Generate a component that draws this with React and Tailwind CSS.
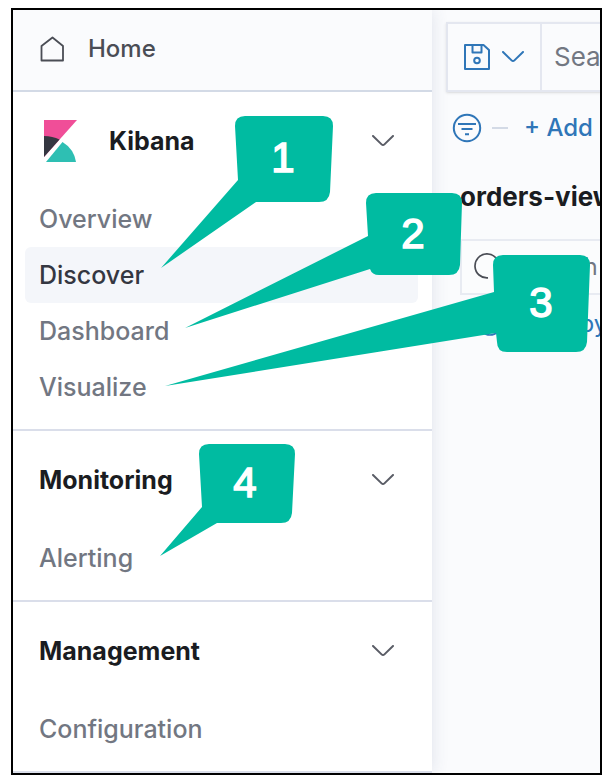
import React from "react";

// Collapsible groups of the side navigation.
const SECTIONS = [
  {
    title: "Kibana",
    logo: true,
    items: ["Overview", "Discover", "Dashboard", "Visualize"],
  },
  { title: "Monitoring", items: ["Alerting"] },
  { title: "Management", items: ["Configuration"] },
];

const ACTIVE = "Discover";

// Numbered callouts drawn over the page: outline + centre of the number.
const CALLOUTS = [
  {
    n: 1,
    x: 283,
    y: 172,
    d: "M245 116H323Q333 116 333 126L330 192Q329 202 319 202H256L161 268L238 180L235 126Q235 116 245 116Z",
  },
  {
    n: 2,
    x: 413,
    y: 248,
    d: "M376 193H452Q462 193 462 203L460 265Q459 275 449 275H379Q372 275 370 269L185 328L368 236L366 203Q366 193 376 193Z",
  },
  {
    n: 3,
    x: 541,
    y: 317,
    d: "M503 255H580Q590 255 590 265L587 342Q586 352 576 352H507Q497 352 497 342L496 333L165 386L494 292L493 265Q493 255 503 255Z",
  },
  {
    n: 4,
    x: 245,
    y: 497,
    d: "M209 444H285Q295 444 295 454L292 513Q291 523 281 523H217L160 556L202 507L199 454Q199 444 209 444Z",
  },
];

function Chevron({ className }) {
  return (
    <svg
      className={className}
      width="22"
      height="12"
      viewBox="0 0 22 12"
      fill="none"
      stroke="currentColor"
      strokeWidth="2"
      strokeLinecap="round"
      strokeLinejoin="round"
    >
      <path d="M1 1L9.6 9.4Q11 10.8 12.4 9.4L21 1" />
    </svg>
  );
}

function HomeIcon() {
  return (
    <svg width="24" height="26" viewBox="0 0 24 26" fill="none" stroke="#4a4d55" strokeWidth="1.8" strokeLinejoin="round">
      <path d="M1.5 10L12.500 1.500L23 10V24.500H1.500Z" />
    </svg>
  );
}

function KibanaLogo() {
  return (
    <svg width="34" height="44" viewBox="0 0 34 44">
      <path d="M1 1V38L34 1Z" fill="#f04e98" />
      <path d="M1 17V38L16.500 20.500Q9.500 17 1 17Z" fill="#343741" />
      <path d="M19.500 23L3 43H33Q31 30 19.500 23Z" fill="#2ebfb3" />
    </svg>
  );
}

function SaveIcon() {
  return (
    <svg width="26" height="26" viewBox="0 0 26 26" fill="none" stroke="currentColor" strokeWidth="2" strokeLinejoin="round">
      <path d="M1 1H19.500L25 6V25H1Z" />
      <path d="M8.500 1V8.500H17.500V1" />
      <circle cx="13" cy="16.500" r="2.800" />
    </svg>
  );
}

function FilterIcon() {
  return (
    <svg width="30" height="30" viewBox="0 0 30 30" fill="none" stroke="currentColor" strokeWidth="2">
      <circle cx="15" cy="15" r="13.200" />
      <path d="M6 11H24M9.500 16H20.500M13 21.300H17" />
    </svg>
  );
}

function NavSection({ title, logo, items }) {
  return (
    <section className="border-b-2 border-[#dadeea] pb-[14px] text-[25px]">
      <button className="flex h-[98px] w-full items-center pl-[26px] pr-[38px] text-left">
        {logo && (
          <span className="mr-8 ml-1">
            <KibanaLogo />
          </span>
        )}
        <span className="flex-1 font-bold text-[#1a1c21]">{title}</span>
        <Chevron className="text-[#5a5d66]" />
      </button>
      <ul className="pt-px pr-[14px] pl-3">
        {items.map((item) => (
          <li key={item}>
            <a
              href="#"
              className={
                item === ACTIVE
                  ? "flex h-14 items-center rounded-md bg-[#f4f6fa] px-[14px] font-medium text-[#343741]"
                  : "flex h-14 items-center rounded-md px-[14px] font-medium text-[#727782]"
              }
            >
              {item}
            </a>
          </li>
        ))}
      </ul>
    </section>
  );
}

function Sidebar() {
  return (
    <nav className="relative z-10 w-[419px] shrink-0 bg-white shadow-[0_0_16px_rgba(60,70,120,0.14)]">
      <a
        href="#"
        className="flex h-[82px] items-center gap-6 border-b-2 border-[#d3dae6] bg-[#fafbfd] pb-[2px] pl-[27px] font-medium text-[#4a4d55]"
      >
        <HomeIcon />
        Home
      </a>
      {SECTIONS.map((s) => (
        <NavSection key={s.title} {...s} />
      ))}
    </nav>
  );
}

function Discover() {
  return (
    <main className="min-w-0 flex-1 overflow-hidden bg-[#fafbfd] pt-3 pl-[14px] whitespace-nowrap">
      {/* Query bar */}
      <div className="flex h-[70px] w-max border-2 border-[#e4e7f0] shadow-sm">
        <button aria-label="Saved queries" className="flex w-[94px] items-center gap-3 border-r-2 border-[#e4e7f0] pl-4 text-[#2f76b8]">
          <SaveIcon />
          <Chevron />
        </button>
        <input
          aria-label="Search"
          placeholder="Search"
          className="w-60 bg-transparent px-3 text-[26px] outline-none placeholder:text-[#727782]"
        />
      </div>

      {/* Filter row */}
      <div className="flex h-[71px] items-center pl-[6px] text-[#2f76b8]">
        <FilterIcon />
        <span className="mx-[10px] h-[2px] w-4 shrink-0 bg-[#d3dae6]" />
        <button className="pl-[6px] font-medium">+ Add</button>
      </div>

      {/* Field list */}
      <div className="pl-[14px]">
        <h2 className="flex h-[68px] items-center text-[26px] font-bold text-[#1a1c21]">orders-view</h2>
        <label className="mt-2 flex h-14 w-max items-center gap-4 border-2 border-[#e8ebf2] bg-[#fbfcfd] pl-3">
          <svg width="28" height="28" viewBox="0 0 28 28" fill="none" stroke="#4a4d55" strokeWidth="1.700">
            <path d="M14 24.900A12 12 0 1 1 25 13" />
            <path d="M21.500 21.500L27 27" />
          </svg>
          <input aria-label="Search fields" placeholder="Search" className="w-60 bg-transparent outline-none placeholder:text-[#727782]" />
        </label>
        <button className="flex h-[58px] items-center gap-3 pl-4 text-[#2f76b8]">
          <svg width="28" height="28" viewBox="0 0 28 28" fill="none" stroke="currentColor" strokeWidth="1.700">
            <circle cx="14" cy="14" r="11" />
          </svg>
          Filter by
        </button>
      </div>
    </main>
  );
}

function Callouts() {
  return (
    <svg
      className="pointer-events-none absolute top-0 left-0 z-20"
      width="612"
      height="784"
      viewBox="0 0 612 784"
      fill="#00bba1"
    >
      {CALLOUTS.map((c) => (
        <g key={c.n}>
          <path d={c.d} />
          <text
            x={c.x}
            y={c.y}
            textAnchor="middle"
            className="fill-white stroke-white stroke-[1.5px] font-['Liberation_Sans',Arial,sans-serif] text-[42px]"
          >
            {c.n}
          </text>
        </g>
      ))}
    </svg>
  );
}

export default function App() {
  return (
    <div className="relative bg-white pt-2 pr-[10px] pb-[9px] pl-[11px] font-[Inter,sans-serif] text-[24px] leading-8">
      <div className="flex overflow-hidden border-2 border-black">
        <Sidebar />
        <Discover />
      </div>
      <Callouts />
    </div>
  );
}
